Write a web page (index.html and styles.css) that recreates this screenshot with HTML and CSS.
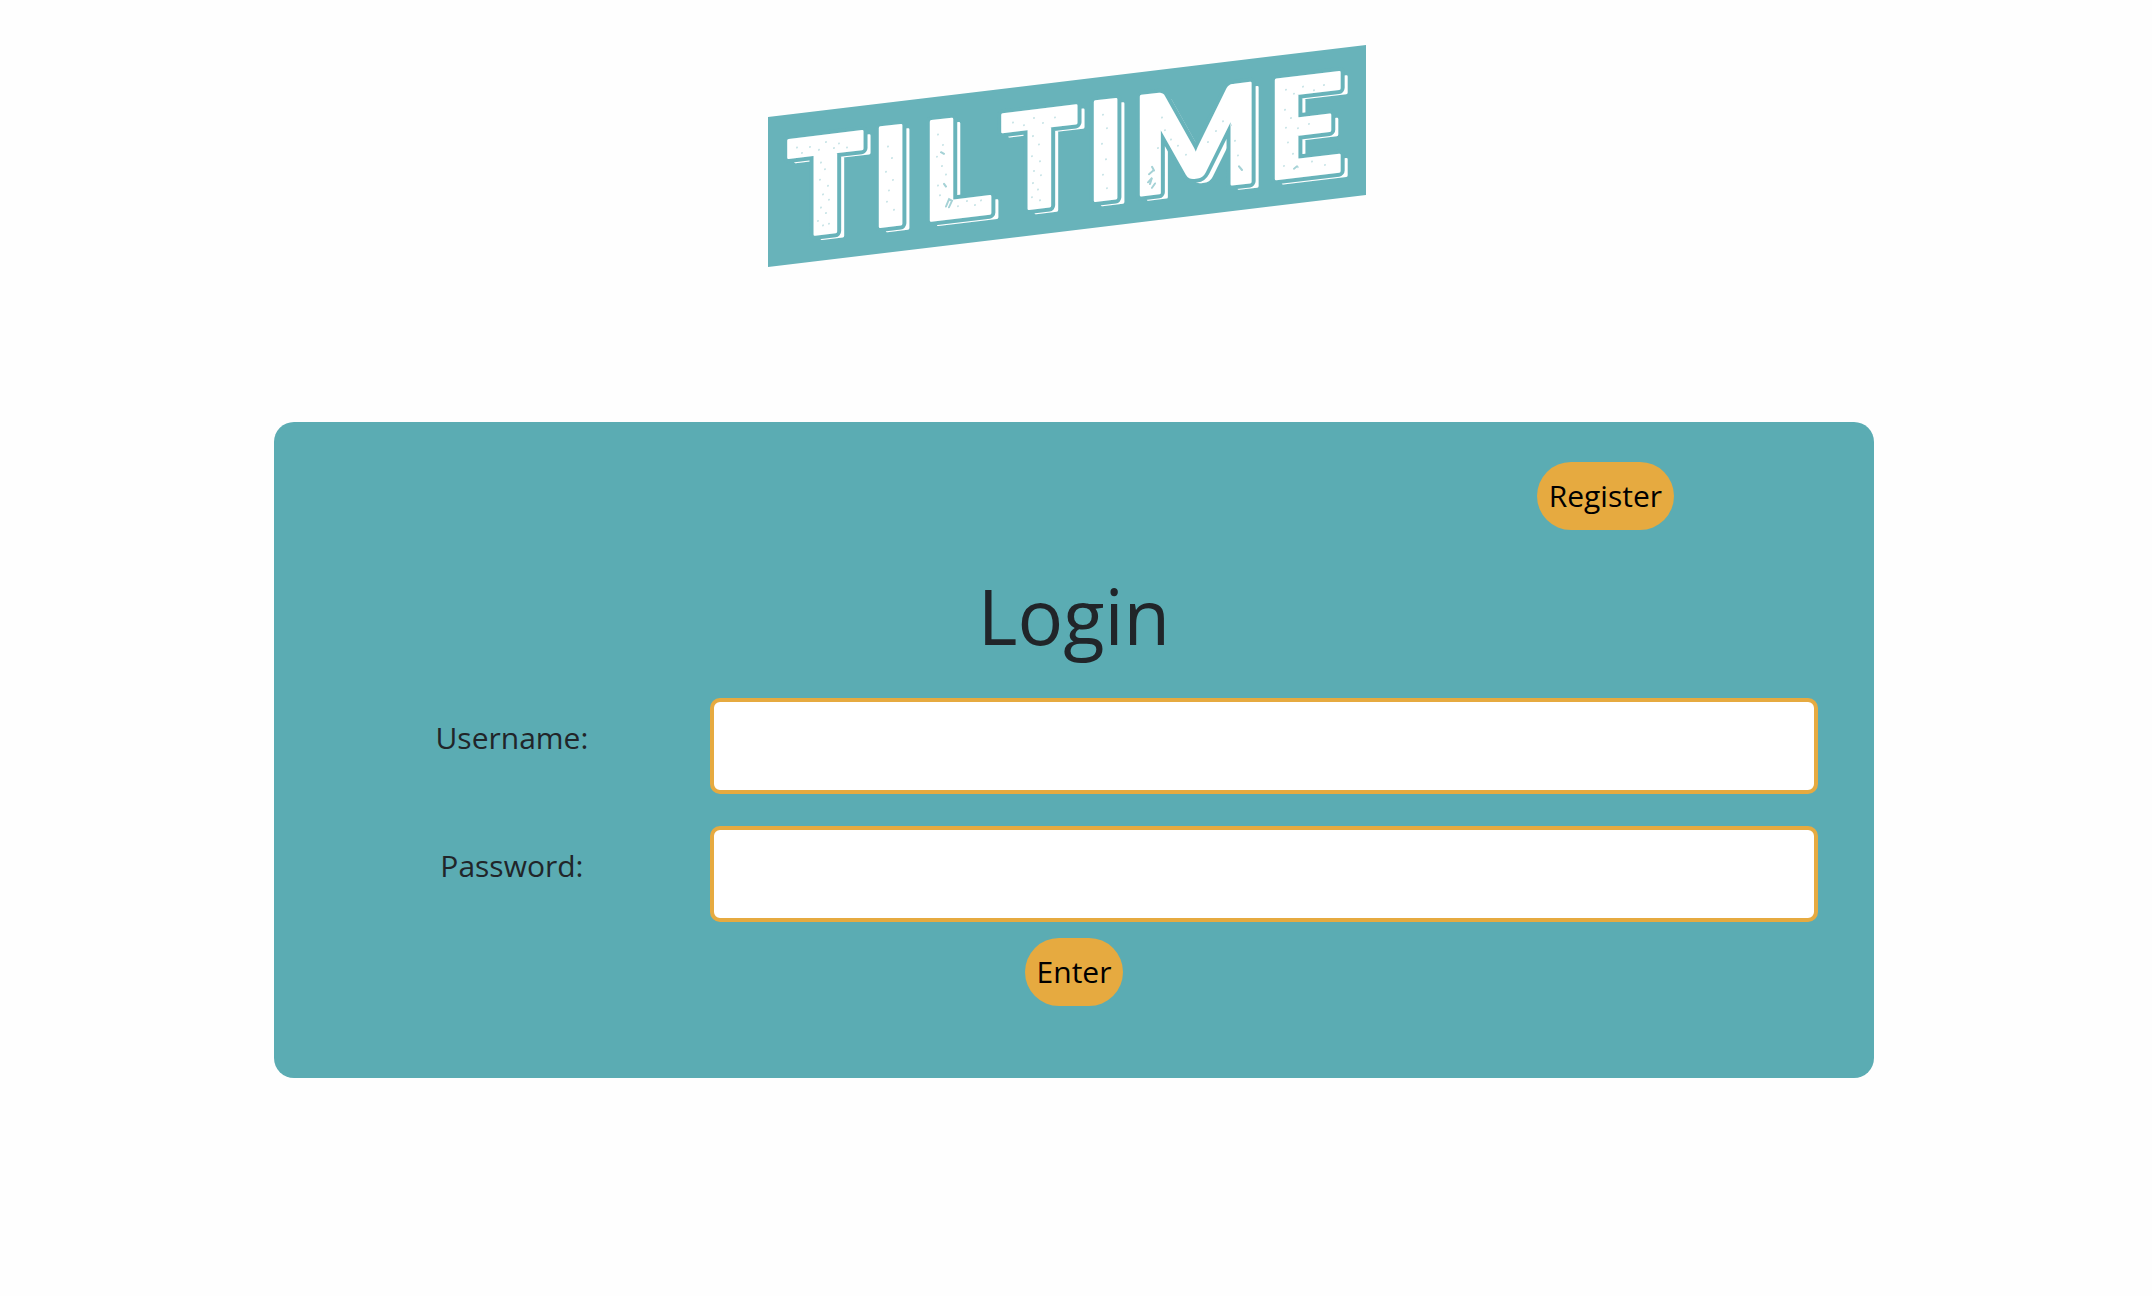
FILE: index.html
```html
<!DOCTYPE html>
<html lang="en">
<head>
  <meta charset="utf-8">
  <meta name="viewport" content="width=device-width, initial-scale=1">
  <title>Tiltime</title>
  <link rel="stylesheet" href="styles.css">
</head>
<body>
  <header class="masthead">
    <svg class="logo" viewBox="0 0 612 222" role="img" aria-label="Tiltime">
      <g transform="skewY(-6.86)">
        <rect class="logo-banner" x="0" y="72" width="598" height="150"/>
        <g class="logo-shadow" transform="translate(7 5)" aria-hidden="true">
          <text class="logo-tee" x="18 232" y="195">TT</text>
          <text x="102 153 317 363 498" y="195">ILIME</text>
        </g>
        <g class="logo-gap" aria-hidden="true">
          <text class="logo-tee" x="18 232" y="195">TT</text>
          <text x="102 153 317 363 498" y="195">ILIME</text>
        </g>
        <g class="logo-face">
          <text class="logo-tee" x="18 232" y="195">TT</text>
          <text x="102 153 317 363 498" y="195">ILIME</text>
        </g>
        <path class="logo-speck" d="M29 106h0M34 112h0M42 107h0M51 111h0M58 104h0M66 111h0M71 107h0M79 112h0M53 124h0M57 131h0M52 141h0M60 148h0M55 156h0M61 162h0M53 169h0M58 175h0M50 182h0M55 187h0M61 186h0M120 116h0M124 128h0M118 141h0M125 150h0M121 160h0M119 171h0M126 180h0M170 110h0M175 121h0M169 132h0M174 142h0M178 151h0M170 161h0M172 171h0M181 177h0M190 184h0M199 180h0M207 185h0M213 181h0M245 107h0M256 111h0M266 105h0M275 111h0M287 107h0M265 123h0M271 132h0M264 143h0M272 149h0M266 158h0M273 163h0M265 170h0M270 177h0M264 184h0M272 188h0M335 110h0M339 124h0M334 139h0M338 155h0M335 170h0M339 184h0"/>
        <path class="logo-speck" d="M394 120h0M397 133h0M403 143h0M410 150h0M390 150h0M418 160h0M440 150h0M448 140h0M455 131h0M463 136h0M467 152h0M470 167h0M518 107h0M526 112h0M535 106h0M546 111h0M556 107h0M517 127h0M523 136h0M518 145h0M530 147h0M541 144h0M520 160h0M525 172h0M516 183h0M530 186h0M544 182h0M557 187h0"/>
        <path class="logo-chip" d="M173 128l3 2M176 160l2 3M178 183l3-7l3 2l-3 6M384 168l2 4M381 175l4-3M380 183l4-4l-2 6M384 189l3-4M471 178l3 4M526 187l3-2"/>
      </g>
    </svg>
  </header>

  <main class="card">
    <div class="card-actions">
      <button class="pill" type="button">Register</button>
    </div>
    <form class="login">
      <h1 class="title">Login</h1>
      <div class="field">
        <label class="field-label" for="username">Username:</label>
        <input class="field-input" id="username" name="username" type="text">
      </div>
      <div class="field">
        <label class="field-label" for="password">Password:</label>
        <input class="field-input" id="password" name="password" type="password">
      </div>
      <button class="pill submit" type="submit">Enter</button>
    </form>
  </main>
</body>
</html>
```

FILE: styles.css
```css
* {
  box-sizing: border-box;
}

body {
  margin: 0;
  padding: 45px 4px 40px 0;
  background: #fefefe;
  color: #212529;
  font-family: "Open Sans", "Noto Sans", sans-serif;
  font-size: 30px;
  line-height: 48px;
}

.masthead {
  display: flex;
  justify-content: center;
  margin-bottom: 155px;
}

.logo {
  width: 612px;
  max-width: 100%;
  overflow: visible;
}

.logo text {
  font-family: Lato, sans-serif;
  font-size: 136px;
  font-weight: 900;
}

.logo .logo-tee {
  font-family: "Open Sans", sans-serif;
  font-weight: 700;
}

.logo-banner {
  fill: #68b3ba;
}

.logo-shadow,
.logo-face {
  fill: #fff;
  stroke: #fff;
  stroke-width: 3px;
  stroke-linejoin: round;
}

.logo-gap {
  fill: #68b3ba;
  stroke: #68b3ba;
  stroke-width: 11px;
  stroke-linejoin: round;
}

.logo-speck {
  fill: none;
  stroke: #c8e4e7;
  stroke-width: 2px;
  stroke-linecap: round;
}

.logo-chip {
  fill: none;
  stroke: #a5d2d6;
  stroke-width: 2px;
  stroke-linecap: round;
}

.card {
  width: 75%;
  max-width: 1600px;
  margin: 0 auto;
  padding: 40px 56px 72px 40px;
  border-radius: 20px;
  background: #5bacb3;
}

.card-actions {
  display: flex;
  justify-content: flex-end;
  padding-right: 144px;
}

.pill {
  height: 68px;
  padding: 0 12px;
  border: 0;
  border-radius: 34px;
  background: #e6aa40;
  color: #000;
  font: inherit;
}

.login {
  display: flex;
  flex-direction: column;
}

.title {
  margin: 38px 0 34px;
  padding-left: 16px;
  font-size: 76px;
  font-weight: 400;
  line-height: 96px;
  text-align: center;
}

.field {
  display: grid;
  grid-template-columns: 1fr 2.8fr;
  margin-bottom: 32px;
}

.field-label {
  padding-top: 16px;
  text-align: center;
}

.field-input {
  width: 100%;
  height: 96px;
  padding: 0 16px;
  border: 4px solid #e6aa40;
  border-radius: 10px;
  background: #fff;
  color: inherit;
  font: inherit;
}

.submit {
  align-self: center;
  margin: -16px 0 0 16px;
}
```
